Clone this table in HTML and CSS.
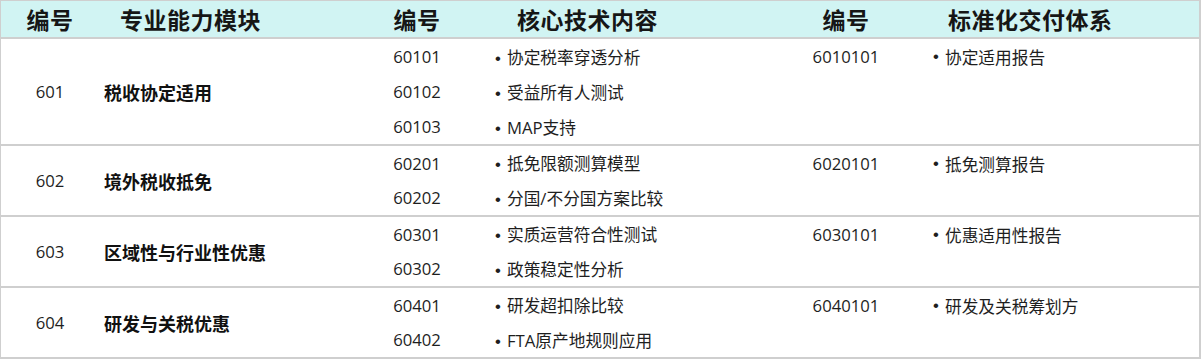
FILE: index.html
```html
<!DOCTYPE html>
<html lang="zh-CN">
<head>
<meta charset="utf-8">
<title>能力模块</title>
<link rel="stylesheet" href="styles.css">
</head>
<body>
<div class="table">
  <div class="head">
    <div class="h c1 center">编号</div>
    <div class="h c2 h2">专业能力模块</div>
    <div class="h c3 center">编号</div>
    <div class="h c4 h4">核心技术内容</div>
    <div class="h c5 center">编号</div>
    <div class="h c6 h6">标准化交付体系</div>
  </div>

  <div class="group g3">
    <div class="c1 center mid">601</div>
    <div class="c2 mid name">税收协定适用</div>
    <div class="subs">
      <div class="sub"><div class="c3 center">60101</div><div class="c4 item"><span class="dot">•</span>协定税率穿透分析</div></div>
      <div class="sub"><div class="c3 center">60102</div><div class="c4 item"><span class="dot">•</span>受益所有人测试</div></div>
      <div class="sub"><div class="c3 center">60103</div><div class="c4 item"><span class="dot">•</span>MAP支持</div></div>
    </div>
    <div class="c5 center top">6010101</div>
    <div class="c6 item top"><span class="dot">•</span>协定适用报告</div>
  </div>

  <div class="group">
    <div class="c1 center mid">602</div>
    <div class="c2 mid name">境外税收抵免</div>
    <div class="subs">
      <div class="sub"><div class="c3 center">60201</div><div class="c4 item"><span class="dot">•</span>抵免限额测算模型</div></div>
      <div class="sub"><div class="c3 center">60202</div><div class="c4 item"><span class="dot">•</span>分国/不分国方案比较</div></div>
    </div>
    <div class="c5 center top">6020101</div>
    <div class="c6 item top"><span class="dot">•</span>抵免测算报告</div>
  </div>

  <div class="group">
    <div class="c1 center mid">603</div>
    <div class="c2 mid name">区域性与行业性优惠</div>
    <div class="subs">
      <div class="sub"><div class="c3 center">60301</div><div class="c4 item"><span class="dot">•</span>实质运营符合性测试</div></div>
      <div class="sub"><div class="c3 center">60302</div><div class="c4 item"><span class="dot">•</span>政策稳定性分析</div></div>
    </div>
    <div class="c5 center top">6030101</div>
    <div class="c6 item top"><span class="dot">•</span>优惠适用性报告</div>
  </div>

  <div class="group">
    <div class="c1 center mid">604</div>
    <div class="c2 mid name">研发与关税优惠</div>
    <div class="subs">
      <div class="sub"><div class="c3 center">60401</div><div class="c4 item"><span class="dot">•</span>研发超扣除比较</div></div>
      <div class="sub"><div class="c3 center">60402</div><div class="c4 item"><span class="dot">•</span>FTA原产地规则应用</div></div>
    </div>
    <div class="c5 center top">6040101</div>
    <div class="c6 item top"><span class="dot">•</span>研发及关税筹划方</div>
  </div>
</div>
</body>
</html>
```

FILE: styles.css
```css
* { box-sizing: border-box; }
html, body { margin: 0; padding: 0; background: #ffffff; }
body {
  font-family: "Open Sans", "Noto Sans CJK SC", sans-serif;
  font-size: 16.7px;
  color: #1e1e1e;
}
.table {
  width: 1201px;
  border-top: 1px solid #cfcfcf;
  border-left: 1px solid #cfcfcf;
  border-right: 2px solid #cfcfcf;
}
.head {
  display: flex;
  height: 38px;
  background: #d1f4f3;
  border-bottom: 2px solid #cfcfcf;
}
.h {
  font-family: "Noto Sans CJK SC", sans-serif;
  font-weight: 700;
  font-size: 23px;
  line-height: 36px;
  color: #161616;
  letter-spacing: 0.5px;
}
.c1 { width: 98px; flex: none; }
.c2 { width: 271px; flex: none; }
.c3 { width: 94px; flex: none; }
.c4 { width: 326px; flex: none; }
.c5 { width: 112px; flex: none; }
.c6 { width: 297px; flex: none; }
.center { text-align: center; }
.h2 { padding-left: 21px; }
.h4 { padding-left: 53px; }
.h6 { padding-left: 46px; }

.group {
  display: flex;
  border-bottom: 2px solid #cfcfcf;
}
.subs { display: flex; flex-direction: column; flex: none; }
.sub { display: flex; height: 34.5px; align-items: center; }
.g3 .sub { height: 35px; }
.mid { display: flex; align-items: center; justify-content: center; }
.name {
  justify-content: flex-start;
  padding-left: 5px;
  font-family: "Noto Sans CJK SC", sans-serif;
  font-weight: 700;
  font-size: 18px;
  color: #111;
}
.top { height: 35px; display: flex; align-items: center; }
.c5.top { justify-content: center; }
.item { padding-left: 31px; white-space: nowrap; }
.dot {
  display: inline-block;
  width: 12px;
  font-family: "Liberation Sans", sans-serif;
}
```
